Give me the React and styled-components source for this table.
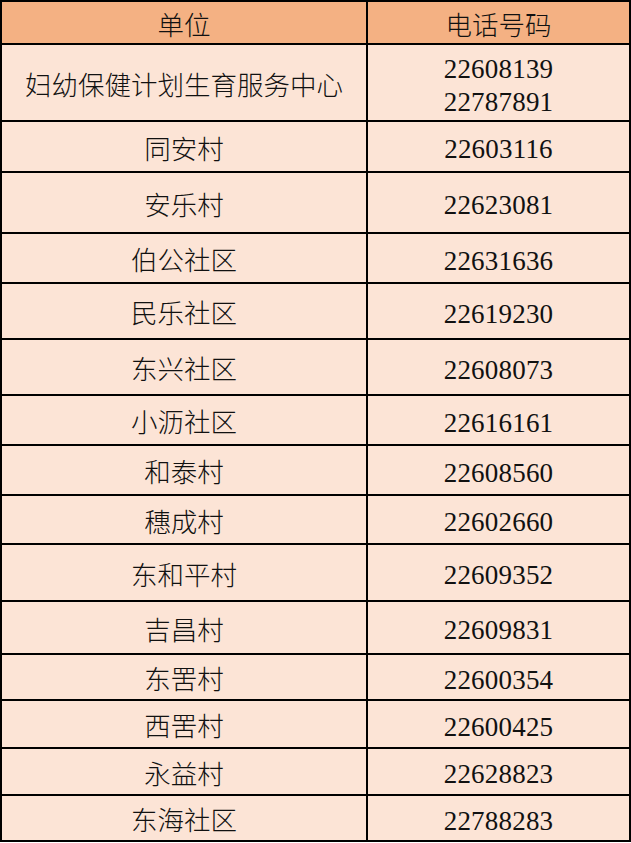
import React from 'react';
import styled, { createGlobalStyle } from 'styled-components';

const GlobalStyle = createGlobalStyle`
  html, body {
    margin: 0;
    padding: 0;
    background: #ffffff;
  }
`;

const rows = [
  { name: '妇幼保健计划生育服务中心', phones: ['22608139', '22787891'], h: 75 },
  { name: '同安村', phones: ['22603116'], h: 49 },
  { name: '安乐村', phones: ['22623081'], h: 59 },
  { name: '伯公社区', phones: ['22631636'], h: 48 },
  { name: '民乐社区', phones: ['22619230'], h: 54 },
  { name: '东兴社区', phones: ['22608073'], h: 54 },
  { name: '小沥社区', phones: ['22616161'], h: 48 },
  { name: '和泰村', phones: ['22608560'], h: 48 },
  { name: '穗成村', phones: ['22602660'], h: 47 },
  { name: '东和平村', phones: ['22609352'], h: 55 },
  { name: '吉昌村', phones: ['22609831'], h: 51 },
  { name: '东罟村', phones: ['22600354'], h: 44 },
  { name: '西罟村', phones: ['22600425'], h: 46 },
  { name: '永益村', phones: ['22628823'], h: 45 },
  { name: '东海社区', phones: ['22788283'], h: 44 },
];

const Sheet = styled.div`
  width: 631px;
  box-sizing: border-box;
  display: grid;
  grid-template-columns: 364px 1fr;
  grid-template-rows: ${({ $heights }) => $heights.map((h) => `${h}px`).join(' ')};
  gap: 2px;
  padding: 2px;
  background: #000000;
`;

const Cell = styled.div`
  display: flex;
  flex-direction: column;
  align-items: center;
  justify-content: center;
  background: ${({ $head }) => ($head ? '#f4b183' : '#fce4d6')};
  color: #111111;
  font-family: ${({ $num }) =>
    $num
      ? '"Liberation Serif", "Noto Sans CJK SC", serif'
      : '"Noto Sans CJK SC", "Liberation Sans", sans-serif'};
  font-size: ${({ $num }) => ($num ? '27px' : '26.5px')};
  font-weight: ${({ $num }) => ($num ? 400 : 300)};
  line-height: ${({ $num }) => ($num ? '33px' : '30px')};
  padding-top: ${({ $num }) => ($num ? '6px' : '2px')};
  box-sizing: border-box;
`;

const Phone = styled.span`
  display: block;
  letter-spacing: 0.2px;
`;

const App = () => {
  const heights = [41, ...rows.map((r) => r.h)];
  return (
    <>
      <GlobalStyle />
      <Sheet $heights={heights}>
        <Cell $head>单位</Cell>
        <Cell $head>电话号码</Cell>
        {rows.map((row) => (
          <React.Fragment key={row.name}>
            <Cell>{row.name}</Cell>
            <Cell $num>
              {row.phones.map((p) => (
                <Phone key={p}>{p}</Phone>
              ))}
            </Cell>
          </React.Fragment>
        ))}
      </Sheet>
    </>
  );
};

export default App;
